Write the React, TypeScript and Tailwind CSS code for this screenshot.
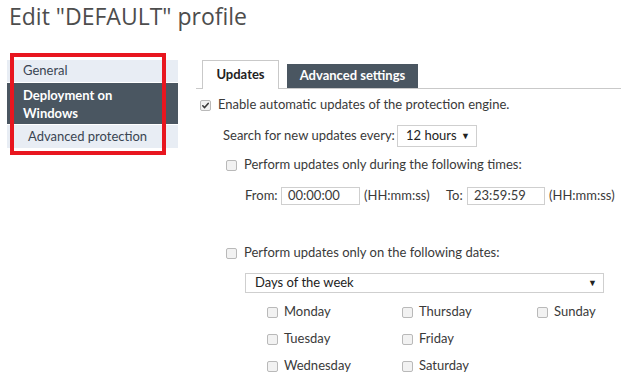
import React from 'react';

function Box({ checked = false }: { checked?: boolean }) {
  return (
    <span className="inline-flex w-[11px] h-[11px] shrink-0 items-center justify-center rounded-[2px] border border-[#b9b9b9] bg-[#f2f2f2]">
      {checked && (
        <svg width="9" height="9" viewBox="0 0 9 9">
          <path d="M1.8 4.8 L3.6 6.6 L7.2 2.4" fill="none" stroke="#3a3a3a" strokeWidth="1.6" strokeLinecap="round" strokeLinejoin="round" />
        </svg>
      )}
    </span>
  );
}

const days = [
  ['Monday', 'Thursday', 'Sunday'],
  ['Tuesday', 'Friday', ''],
  ['Wednesday', 'Saturday', ''],
];

export default function App() {
  return (
    <div
      className="relative w-[621px] h-[382px] overflow-hidden bg-white text-[13px] text-[#3a3a3a] whitespace-nowrap"
      style={{ fontFamily: 'Lato, "Open Sans", sans-serif' }}
    >
      <h1
        className="pl-[9px] pt-[1px] text-[23px] leading-[30px] font-normal text-[#4d4d4d]"
        style={{ fontFamily: '"Open Sans", sans-serif' }}
      >
        Edit "DEFAULT" profile
      </h1>

      <div className="flex mt-[29px]">
        {/* left nav */}
        <div className="w-[178px] pl-[7px] shrink-0">
          <div className="h-[22px] flex items-center pl-[16px] bg-[#e8edf4] text-[#3a4552]">General</div>
          <div className="h-[41px] mt-[1px] flex flex-col justify-center pl-[16px] bg-[#4a5661] text-white font-bold leading-[18px]">
            <span>Deployment on</span>
            <span>Windows</span>
          </div>
          <div className="h-[23px] mt-[1px] flex items-center pl-[21px] bg-[#e8edf4] text-[#3a4552]">Advanced protection</div>
        </div>

        {/* right content */}
        <div className="ml-[18px] flex-1 flex flex-col">
          <div className="flex items-end h-[29px] pl-[6px] border-b border-[#c9c9c9]">
            <div className="w-[77px] h-[29px] -mb-px flex items-center justify-center border border-b-0 border-[#c9c9c9] bg-white font-bold text-[#222]">
              Updates
            </div>
            <div className="ml-[8px] w-[131px] h-[24px] flex items-center justify-center bg-[#4a5661] font-bold text-white">
              Advanced settings
            </div>
          </div>

          <div className="mt-[6px] h-[20px] pl-[4px] flex items-center gap-[7px]">
            <Box checked />
            <span>Enable automatic updates of the protection engine.</span>
          </div>

          <div className="mt-[10px] h-[22px] pl-[27px] flex items-center">
            <span className="w-[174px]">Search for new updates every:</span>
            <div className="w-[80px] h-[22px] flex items-center justify-between pl-[8px] pr-[6px] border border-[#cfcfcf] text-[#222]">
              <span>12 hours</span>
              <span className="text-[9px]">▼</span>
            </div>
          </div>

          <div className="mt-[8px] h-[20px] pl-[30px] flex items-center gap-[7px]">
            <Box />
            <span>Perform updates only during the following times:</span>
          </div>

          <div className="mt-[12px] h-[18px] pl-[49px] flex items-center">
            <span className="w-[36px] shrink-0">From:</span>
            <div className="w-[79px] h-[18px] shrink-0 flex items-center px-[6px] border border-[#cfcfcf]">00:00:00</div>
            <span className="ml-[4px] w-[82px] shrink-0">(HH:mm:ss)</span>
            <span className="w-[21px] shrink-0">To:</span>
            <div className="w-[78px] h-[18px] shrink-0 flex items-center px-[6px] border border-[#cfcfcf]">23:59:59</div>
            <span className="ml-[4px]">(HH:mm:ss)</span>
          </div>

          <div className="mt-[38px] h-[20px] pl-[30px] flex items-center gap-[7px]">
            <Box />
            <span>Perform updates only on the following dates:</span>
          </div>

          <div className="mt-[10px] ml-[49px] w-[359px] h-[20px] flex items-center justify-between pl-[9px] pr-[6px] border border-[#cfcfcf] text-[#222]">
            <span>Days of the week</span>
            <span className="text-[9px]">▼</span>
          </div>

          <div className="mt-[9px] pl-[71px] flex flex-col gap-[7px]">
            {days.map((row, i) => (
              <div key={i} className="grid grid-cols-[135px_135px_100px] h-[20px]">
                {row.map((d, j) => (
                  <div key={j} className="flex items-center gap-[6px]">
                    {d && (
                      <>
                        <Box />
                        <span>{d}</span>
                      </>
                    )}
                  </div>
                ))}
              </div>
            ))}
          </div>
        </div>
      </div>

      {/* red annotation frame */}
      <div className="absolute left-[10px] top-[53px] w-[156px] h-[102px] border-[4px] border-[#e8161f]" />
    </div>
  );
}
